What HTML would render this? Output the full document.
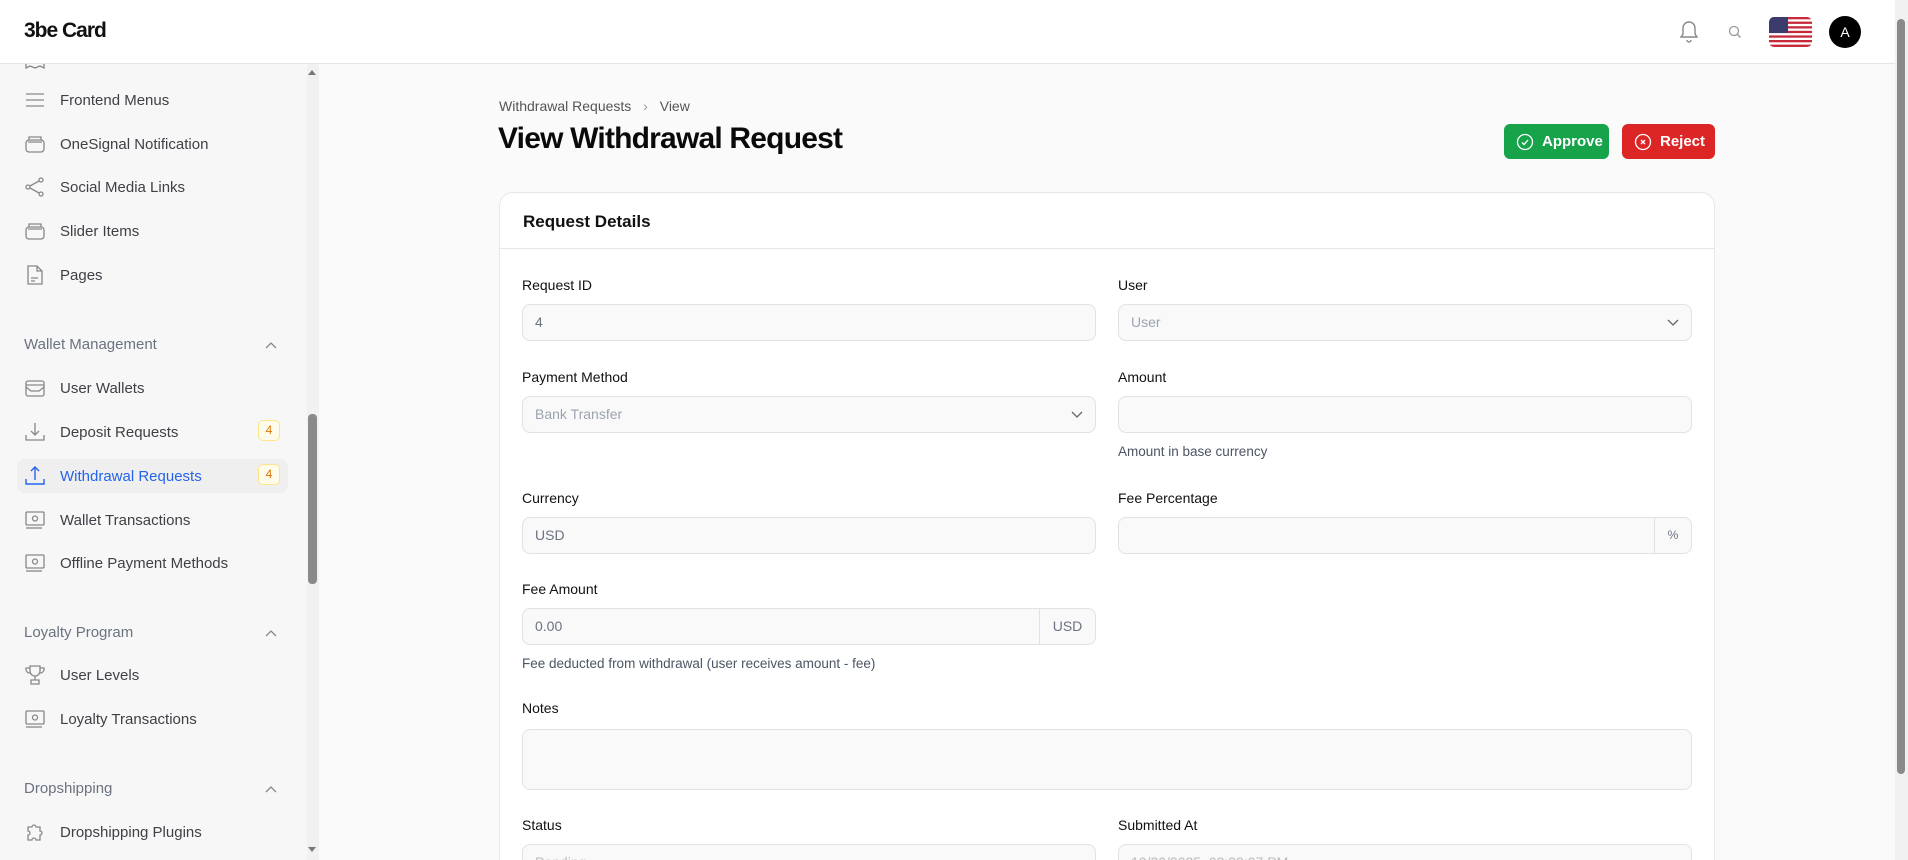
<!DOCTYPE html>
<html><head><meta charset="utf-8"><style>
*{box-sizing:border-box;margin:0;padding:0}
html,body{width:1908px;height:860px;overflow:hidden}
body{background:#fafafa;font-family:"Liberation Sans",sans-serif;color:#111}
#wrap{position:relative;width:1908px;height:860px;overflow:hidden}
.hdr{position:absolute;left:0;top:0;width:1895px;height:64px;background:#fff;border-bottom:1px solid #e5e5e5}
.logo{position:absolute;left:24px;top:19px;font-size:21px;font-weight:bold;letter-spacing:-1px;color:#111}
.side{position:absolute;left:0;top:64px;width:319px;height:796px;background:#f7f7f7}
.it{position:absolute;left:17px;width:271px;height:34px;display:flex;align-items:center;font-size:15px;color:#3f3f46}
.it svg{position:absolute;left:8px;top:7px}
.it span{position:absolute;left:43px}
.sec{position:absolute;left:24px;font-size:15px;color:#6b7280}
.chev{position:absolute;left:265px}
.badge{position:absolute;left:241px;top:5px;width:22px;height:21px;border:1px solid #fde68a;background:#fffbeb;border-radius:5px;color:#d97706;font-size:12px;text-align:center;line-height:19px}
.card{position:absolute;left:499px;top:192px;width:1216px;height:700px;background:#fff;border:1px solid #e7e7e7;border-radius:14px}
.lbl{position:absolute;font-size:14px;color:#111}
.inp{position:absolute;height:37px;background:#f9f9f9;border:1px solid #e2e2e2;border-radius:8px;font-size:14px;color:#6b7280;padding-left:12px;line-height:35px}
.hint{position:absolute;font-size:13.5px;color:#4b5563}
.btn{position:absolute;top:124px;height:35px;border-radius:6px;color:#fff;font-size:15px;font-weight:bold;display:flex;align-items:center;padding-left:12px}
</style></head><body><div id="wrap">
<div class="hdr">
<div class="logo">3be Card</div>
<svg style="position:absolute;left:1679px;top:20px" width="20" height="24" viewBox="0 0 20 24" fill="none" stroke="#888" stroke-width="1.4"><path d="M10 2a6 6 0 0 0-6 6v6l-2 3h16l-2-3V8a6 6 0 0 0-6-6z"/><path d="M8 20a2 2 0 0 0 4 0"/></svg>
<svg style="position:absolute;left:1727px;top:24px" width="16" height="16" viewBox="0 0 16 16" fill="none" stroke="#999" stroke-width="1.3"><circle cx="7" cy="7" r="4.5"/><path d="M10.5 10.5l3 3"/></svg>
<svg style="position:absolute;left:1769px;top:17px" width="43" height="30" viewBox="0 0 43 30"><defs><clipPath id="c"><rect width="43" height="30" rx="5"/></clipPath></defs><g clip-path="url(#c)"><rect width="43" height="30" fill="#fff"/><g fill="#c62a3b"><rect y="0" width="43" height="2.3"/><rect y="4.6" width="43" height="2.3"/><rect y="9.2" width="43" height="2.3"/><rect y="13.8" width="43" height="2.3"/><rect y="18.4" width="43" height="2.3"/><rect y="23" width="43" height="2.3"/><rect y="27.6" width="43" height="2.4"/></g><rect width="19" height="16" fill="#3c3b6e"/></g></svg>
<div style="position:absolute;left:1829px;top:16px;width:32px;height:32px;border-radius:50%;background:#000;color:#fff;font-size:14px;text-align:center;line-height:32px">A</div>
</div>
<div style="position:absolute;left:1895px;top:0;width:13px;height:860px;background:#f1f1f1"></div>
<div style="position:absolute;left:1897px;top:19px;width:8px;height:755px;background:#8a8a8a;border-radius:4px"></div>

<div class="side">
<svg style="position:absolute;left:25px;top:0" width="20" height="6" viewBox="0 0 20 6" fill="none" stroke="#888" stroke-width="1.3"><path d="M1 0v4l4-2 5 2 5-2 4 2V0"/></svg>
<div style="position:absolute;left:307px;top:0;width:12px;height:796px;background:#f1f1f1"></div>
<div style="position:absolute;left:308px;top:350px;width:9px;height:170px;background:#8a8a8a;border-radius:4px"></div>
<div style="position:absolute;left:308px;top:6px;border:4px solid transparent;border-bottom:5px solid #777;border-top:0"></div>
<div style="position:absolute;left:308px;top:783px;border:4px solid transparent;border-top:5px solid #777;border-bottom:0"></div>

<div class="it" style="top:19px"><svg width="20" height="20" viewBox="0 0 20 20" fill="none" stroke="#888" stroke-width="1.3"><path d="M1 4h18M1 10h18M1 16h18"/></svg><span>Frontend Menus</span></div>
<div class="it" style="top:63px"><svg width="20" height="20" viewBox="0 0 20 20" fill="none" stroke="#888" stroke-width="1.3"><rect x="1" y="6" width="18" height="12" rx="3"/><path d="M4 6V3h12v3M3 8h14"/></svg><span>OneSignal Notification</span></div>
<div class="it" style="top:106px"><svg width="20" height="20" viewBox="0 0 20 20" fill="none" stroke="#888" stroke-width="1.3"><circle cx="3" cy="10" r="2"/><circle cx="16" cy="3" r="2"/><circle cx="16" cy="17" r="2"/><path d="M5 9l9-5M5 11l9 5"/></svg><span>Social Media Links</span></div>
<div class="it" style="top:150px"><svg width="20" height="20" viewBox="0 0 20 20" fill="none" stroke="#888" stroke-width="1.3"><rect x="1" y="6" width="18" height="12" rx="3"/><path d="M4 6V3h12v3M3 8h14"/></svg><span>Slider Items</span></div>
<div class="it" style="top:194px"><svg width="20" height="20" viewBox="0 0 20 20" fill="none" stroke="#888" stroke-width="1.3"><path d="M3 1h9l5 5v13H3z"/><path d="M12 1v5h5M6 13h7M6 16h4"/></svg><span>Pages</span></div>
<div class="sec" style="top:272px">Wallet Management</div>
<svg class="chev" style="top:277px" width="12" height="8" viewBox="0 0 12 8" fill="none" stroke="#888" stroke-width="1.3"><path d="M1 7l5-5 5 5"/></svg>
<div class="it" style="top:307px"><svg width="20" height="20" viewBox="0 0 20 20" fill="none" stroke="#888" stroke-width="1.3"><rect x="1" y="3" width="18" height="15" rx="2"/><path d="M1 7h18M1 9l5 4h8l5-4"/></svg><span>User Wallets</span></div>
<div class="it" style="top:351px"><svg width="20" height="20" viewBox="0 0 20 20" fill="none" stroke="#888" stroke-width="1.3"><path d="M10 1v12M6 9l4 4 4-4M1 13v5h18v-5"/></svg><span>Deposit Requests</span><div class="badge">4</div></div>
<div class="it" style="top:395px;background:#efefef;border-radius:8px;color:#2563eb"><svg width="20" height="20" viewBox="0 0 20 20" fill="none" stroke="#2563eb" stroke-width="1.4"><path d="M10 14V1M6 5l4-4 4 4M1 13v5h18v-5"/></svg><span>Withdrawal Requests</span><div class="badge">4</div></div>
<div class="it" style="top:439px"><svg width="20" height="20" viewBox="0 0 20 20" fill="none" stroke="#888" stroke-width="1.3"><rect x="1" y="2" width="18" height="13" rx="1"/><circle cx="10" cy="8.5" r="2.5"/><path d="M1 18h16"/></svg><span>Wallet Transactions</span></div>
<div class="it" style="top:482px"><svg width="20" height="20" viewBox="0 0 20 20" fill="none" stroke="#888" stroke-width="1.3"><rect x="1" y="2" width="18" height="13" rx="1"/><circle cx="10" cy="8.5" r="2.5"/><path d="M1 18h16"/></svg><span>Offline Payment Methods</span></div>
<div class="sec" style="top:560px">Loyalty Program</div>
<svg class="chev" style="top:565px" width="12" height="8" viewBox="0 0 12 8" fill="none" stroke="#888" stroke-width="1.3"><path d="M1 7l5-5 5 5"/></svg>
<div class="it" style="top:594px"><svg width="20" height="20" viewBox="0 0 20 20" fill="none" stroke="#888" stroke-width="1.3"><path d="M5 1h10v5a5 5 0 0 1-10 0zM5 3H1v2a4 4 0 0 0 4 3M15 3h4v2a4 4 0 0 1-4 3M10 11v4M6 19h8v-4H6z"/></svg><span>User Levels</span></div>
<div class="it" style="top:638px"><svg width="20" height="20" viewBox="0 0 20 20" fill="none" stroke="#888" stroke-width="1.3"><rect x="1" y="2" width="18" height="13" rx="1"/><circle cx="10" cy="8.5" r="2.5"/><path d="M1 18h16"/></svg><span>Loyalty Transactions</span></div>
<div class="sec" style="top:716px">Dropshipping</div>
<svg class="chev" style="top:721px" width="12" height="8" viewBox="0 0 12 8" fill="none" stroke="#888" stroke-width="1.3"><path d="M1 7l5-5 5 5"/></svg>
<div class="it" style="top:751px"><svg width="20" height="20" viewBox="0 0 20 20" fill="none" stroke="#888" stroke-width="1.3"><path d="M3 5h4a2 2 0 1 1 4 0h4v4a2 2 0 1 1 0 4v5h-4a2 2 0 1 0-4 0H3v-5a2 2 0 1 0 0-4z"/></svg><span>Dropshipping Plugins</span></div>
</div>

<div style="position:absolute;left:499px;top:98px;font-size:14px;color:#555">Withdrawal Requests <span style="color:#999;margin:0 8px">›</span> View</div>
<div style="position:absolute;left:498px;top:122px;font-size:30px;font-weight:bold;letter-spacing:-0.8px;color:#0a0a0a">View Withdrawal Request</div>
<div class="btn" style="left:1504px;width:105px;background:#16a34a"><svg width="18" height="18" viewBox="0 0 18 18" fill="none" stroke="#fff" stroke-width="1.3"><circle cx="9" cy="9" r="7.5"/><path d="M6 9.5l2 2 4-4.5"/></svg><span style="margin-left:8px">Approve</span></div>
<div class="btn" style="left:1622px;width:93px;background:#dc2626"><svg width="18" height="18" viewBox="0 0 18 18" fill="none" stroke="#fff" stroke-width="1.3"><circle cx="9" cy="9" r="7.5"/><path d="M7 7l4 4M11 7l-4 4"/></svg><span style="margin-left:8px">Reject</span></div>

<div class="card">
<div style="position:absolute;left:0;top:55px;width:100%;border-top:1px solid #e7e7e7"></div>
<div style="position:absolute;left:23px;top:19px;font-size:17px;font-weight:bold">Request Details</div>
</div>
<div class="lbl" style="left:522px;top:277px">Request ID</div>
<div class="inp" style="left:522px;top:304px;width:574px">4</div>
<div class="lbl" style="left:1118px;top:277px">User</div>
<div class="inp" style="left:1118px;top:304px;width:574px;color:#9ca3af">User<svg style="position:absolute;right:12px;top:14px" width="12" height="8" viewBox="0 0 12 8" fill="none" stroke="#666" stroke-width="1.3"><path d="M1 1l5 5 5-5"/></svg></div>
<div class="lbl" style="left:522px;top:369px">Payment Method</div>
<div class="inp" style="left:522px;top:396px;width:574px;color:#9ca3af">Bank Transfer<svg style="position:absolute;right:12px;top:14px" width="12" height="8" viewBox="0 0 12 8" fill="none" stroke="#666" stroke-width="1.3"><path d="M1 1l5 5 5-5"/></svg></div>
<div class="lbl" style="left:1118px;top:369px">Amount</div>
<div class="inp" style="left:1118px;top:396px;width:574px"></div>
<div class="hint" style="left:1118px;top:444px">Amount in base currency</div>
<div class="lbl" style="left:522px;top:490px">Currency</div>
<div class="inp" style="left:522px;top:517px;width:574px">USD</div>
<div class="lbl" style="left:1118px;top:490px">Fee Percentage</div>
<div class="inp" style="left:1118px;top:517px;width:574px"><div style="position:absolute;right:0;top:0;width:37px;height:35px;border-left:1px solid #e2e2e2;font-size:12px;text-align:center">%</div></div>
<div class="lbl" style="left:522px;top:581px">Fee Amount</div>
<div class="inp" style="left:522px;top:608px;width:574px">0.00<div style="position:absolute;right:0;top:0;width:56px;height:35px;border-left:1px solid #e2e2e2;text-align:center">USD</div></div>
<div class="hint" style="left:522px;top:656px">Fee deducted from withdrawal (user receives amount - fee)</div>
<div class="lbl" style="left:522px;top:700px">Notes</div>
<div class="inp" style="left:522px;top:729px;width:1170px;height:61px"></div>
<div class="lbl" style="left:522px;top:817px">Status</div>
<div class="inp" style="left:522px;top:844px;width:574px;color:#bbb">Pending</div>
<div class="lbl" style="left:1118px;top:817px">Submitted At</div>
<div class="inp" style="left:1118px;top:844px;width:574px;color:#bbb">10/30/2025, 03:39:07 PM</div>
</div></body></html>
